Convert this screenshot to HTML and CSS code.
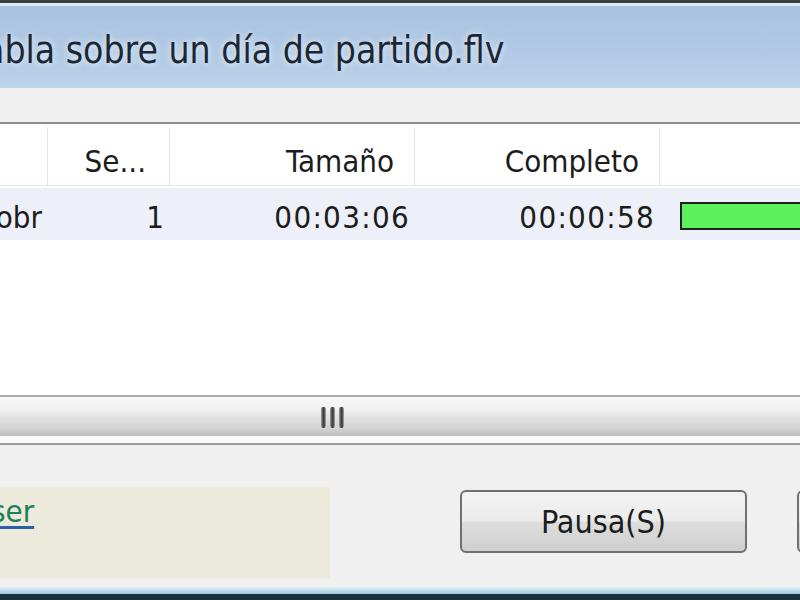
FILE: index.html
```html
<!DOCTYPE html>
<html>
<head>
<meta charset="utf-8">
<link rel="stylesheet" href="styles.css">
</head>
<body>
<div class="window">
  <div class="top-edge"></div>
  <div class="top-line"></div>
  <div class="titlebar"><span class="title">abla sobre un día de partido.flv</span></div>
  <div class="spacer"></div>
  <div class="list">
    <div class="list-head">
      <div class="cell c1 hcell"></div>
      <div class="cell c2 hcell">Se...</div>
      <div class="cell c3 hcell">Tamaño</div>
      <div class="cell c4 hcell">Completo</div>
      <div class="cell c5 hcell last"></div>
    </div>
    <div class="list-row">
      <div class="cell c1 rcell"><span>Habla sobr</span></div>
      <div class="cell c2 rcell">1</div>
      <div class="cell c3 rcell num">00:03:06</div>
      <div class="cell c4 rcell num">00:00:58</div>
      <div class="cell c5 rcell pcell"><div class="progress"></div></div>
    </div>
    <div class="list-fill"></div>
  </div>
  <div class="hscroll">
    <div class="thumb">
      <div class="grip"><i></i><i></i><i></i></div>
    </div>
    <div class="hscroll-under"></div>
  </div>
  <div class="footer">
    <div class="infobox"><a class="link" href="#">ser</a></div>
    <button class="btn btn-pause">Pausa(S)</button>
    <button class="btn btn-next"></button>
  </div>
  <div class="bottom-glass"></div>
  <div class="bottom-edge"></div>
</div>
</body>
</html>
```

FILE: styles.css
```css
html, body {
  margin: 0;
  padding: 0;
}
body {
  width: 800px;
  height: 600px;
  overflow: hidden;
  background: #f0f0f0;
  font-family: "DejaVu Sans Condensed", "DejaVu Sans", sans-serif;
  font-stretch: condensed;
  color: #1c1c1c;
}
.window {
  display: flex;
  flex-direction: column;
  width: 800px;
  height: 600px;
  overflow: hidden;
}
.top-edge {
  height: 3px;
  background: #3a3e43;
}
.top-line {
  height: 3px;
  background: #dfe7ef;
}
.titlebar {
  height: 82px;
  box-sizing: border-box;
  padding-top: 26px;
  background: linear-gradient(180deg, #a9c2df 0%, #b2cae5 60%, #bcd3eb 100%);
  white-space: nowrap;
  overflow: hidden;
}
.title {
  display: inline-block;
  margin-left: -16px;
  font-size: 37px;
  line-height: 37px;
  color: #1b2735;
  text-shadow: 0 0 6px rgba(255,255,255,0.85);
}
.spacer {
  height: 34px;
  background: #f0f0f0;
}
.list {
  border-top: 2px solid #8d8e90;
  background: #ffffff;
  display: flex;
  flex-direction: column;
}
.list-head {
  display: flex;
  height: 62px;
  box-sizing: border-box;
  border-bottom: 1px solid #e5e5e5;
}
.cell {
  box-sizing: border-box;
  display: flex;
  justify-content: flex-end;
  white-space: nowrap;
  overflow: hidden;
  font-size: 31px;
  line-height: 31px;
  flex-shrink: 0;
}
.c1 { width: 48px; }
.c2 { width: 122px; }
.c3 { width: 245px; }
.c4 { width: 245px; }
.c5 { width: 160px; }
.hcell {
  align-items: flex-end;
  padding-bottom: 8px;
  padding-right: 20px;
  border-right: 1px solid #e6e6e6;
  margin-top: 3px;
}
.hcell.last { border-right: none; }
.c2.hcell { padding-right: 23px; }
.list-row {
  display: flex;
  height: 52px;
  margin-top: 2px;
  background: #eef0f9;
}
.rcell {
  align-items: flex-start;
  padding-top: 14px;
  padding-right: 6px;
}
.rcell.num {
  letter-spacing: 1.3px;
  padding-right: 5px;
}
.pcell {
  justify-content: flex-start;
  padding: 14px 0 0 20px;
  overflow: visible;
}
.progress {
  width: 160px;
  height: 28px;
  box-sizing: border-box;
  border: 2px solid #1c1f1c;
  background: #5cef5c;
}
.list-fill {
  height: 155px;
  background: #ffffff;
}
.hscroll {
  height: 50px;
  display: flex;
  flex-direction: column;
  border-top: 2px solid #a9a9a9;
  border-bottom: 2px solid #9c9c9c;
  box-sizing: border-box;
}
.thumb {
  height: 39px;
  background: linear-gradient(180deg, #f8f8f8 0%, #efefef 35%, #e0e0e0 55%, #d2d2d2 82%, #bdbdbd 100%);
  display: flex;
}
.grip {
  display: flex;
  gap: 4px;
  margin-left: 321px;
  margin-top: 10px;
}
.grip i {
  display: block;
  width: 5px;
  height: 21px;
  border-radius: 2px;
  background: linear-gradient(90deg, #a5a5a5 0%, #3a3a3a 45%, #555 70%, #b0b0b0 100%);
}
.hscroll-under {
  flex: 1;
  background: #f9f9f9;
}
.footer {
  height: 141px;
  box-sizing: border-box;
  padding-top: 42px;
  display: flex;
  align-items: flex-start;
  background: #f0f0f0;
}
.infobox {
  width: 330px;
  height: 91px;
  flex-shrink: 0;
  background: #ecebdb;
  box-sizing: border-box;
  padding-top: 9px;
  overflow: hidden;
}
.link {
  display: inline-block;
  margin-left: -9px;
  font-size: 31px;
  line-height: 31px;
  color: #1e7f5c;
  text-decoration: underline;
  text-decoration-color: #2c5fa6;
  text-decoration-thickness: 3px;
  text-underline-offset: 4px;
}
.btn {
  flex-shrink: 0;
  box-sizing: border-box;
  height: 63px;
  margin-top: 3px;
  border: 2px solid #707070;
  border-radius: 6px;
  background: linear-gradient(180deg, #f3f3f3 0%, #ebebeb 48%, #dddddd 52%, #cfcfcf 100%);
  font-family: "DejaVu Sans Condensed", "DejaVu Sans", sans-serif;
  font-stretch: condensed;
  font-size: 32px;
  color: #1c1c1c;
  padding: 0;
}
.btn-pause {
  width: 287px;
  margin-left: 130px;
}
.btn-next {
  width: 120px;
  margin-left: 50px;
}
.bottom-glass {
  height: 8px;
  background: linear-gradient(180deg, #eef4f8 0%, #c6dfec 50%, #9ec7db 100%);
}
.bottom-edge {
  height: 6px;
  background: #17313b;
}
```
